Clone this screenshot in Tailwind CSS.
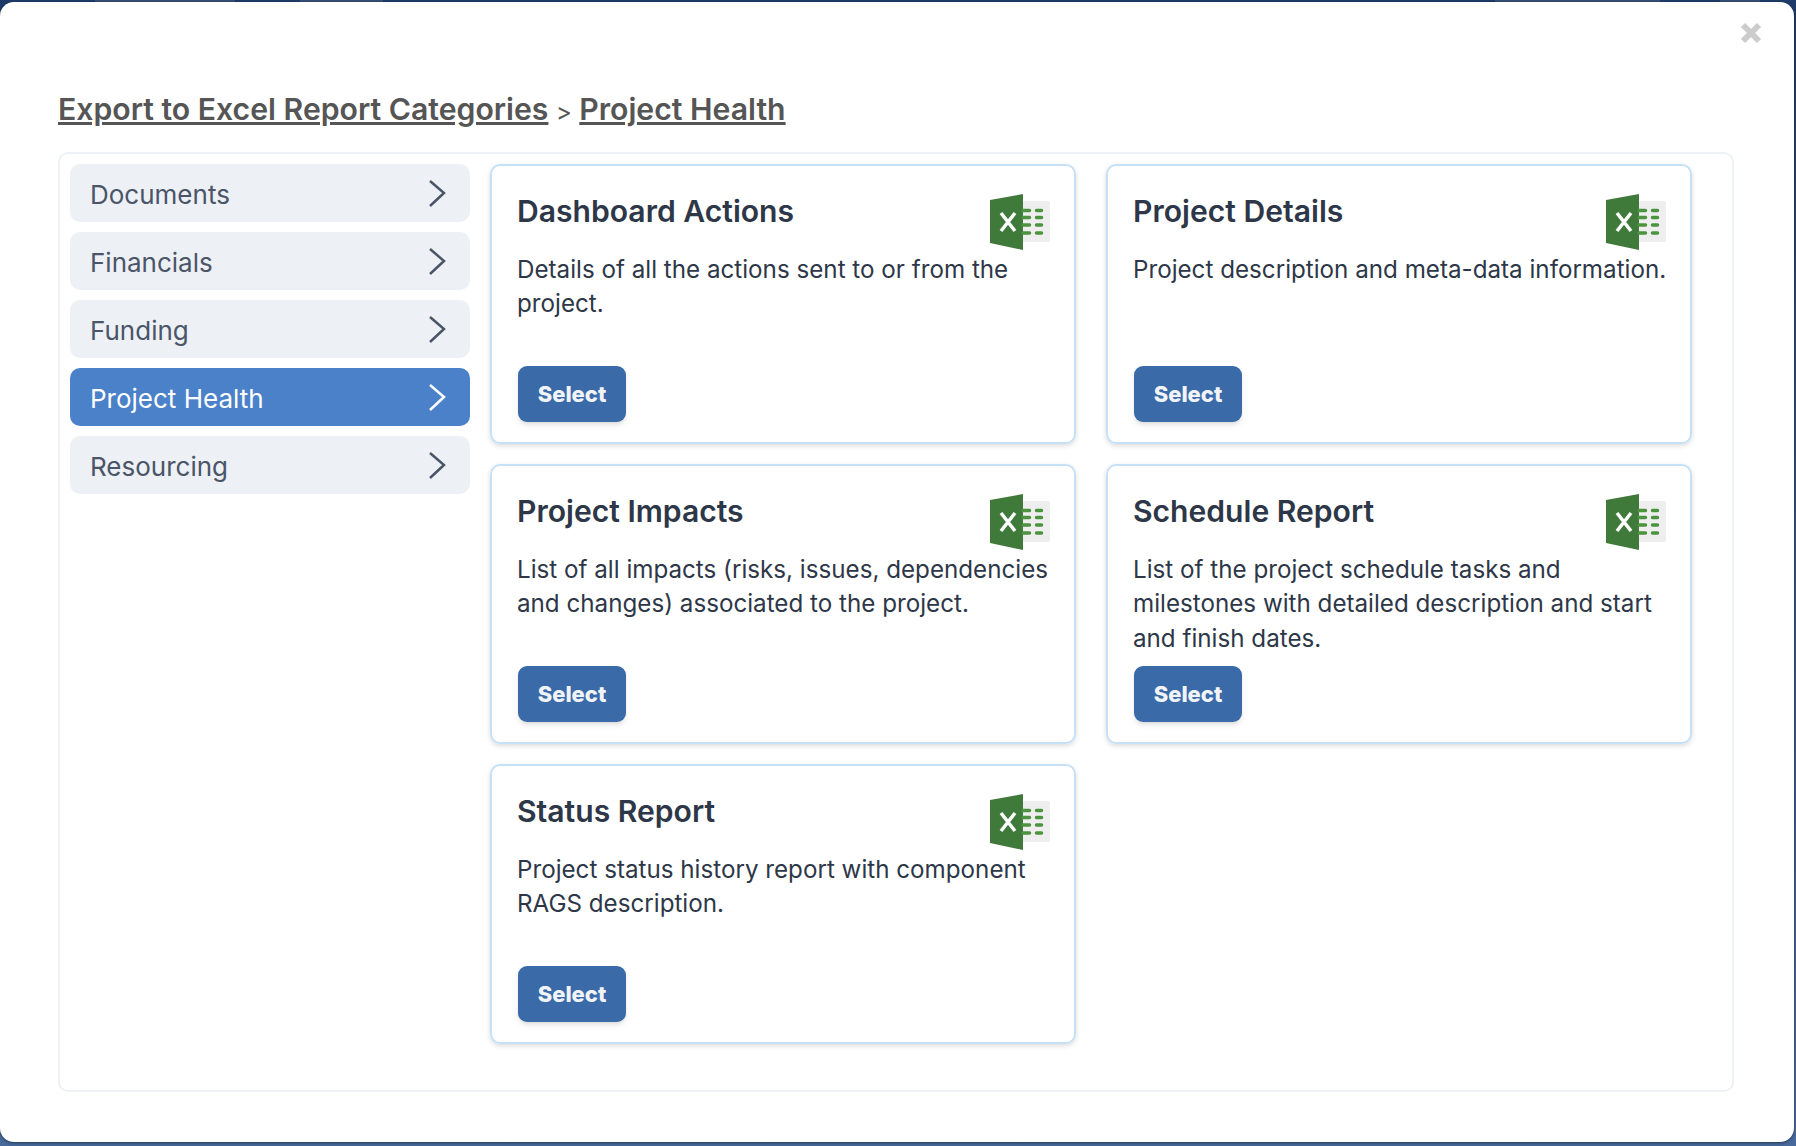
<!DOCTYPE html>
<html>
<head>
    <title>Export to Excel</title>
    <script src="https://cdn.jsdelivr.net/npm/@tailwindcss/browser@4"></script>
</head>
<body class="relative bg-linear-to-b from-[#1e3a68] to-[#47699b] h-[1146px] w-[1796px] overflow-hidden font-['Inter',sans-serif]">
    <!-- page behind the overlay just shows through at the top edge -->
    <div class="absolute left-[95px] top-0 w-[140px] h-[2px] bg-white/10"></div>
    <div class="absolute left-[300px] top-0 w-[83px] h-[2px] bg-white/10"></div>
    <div class="absolute left-[1495px] top-0 w-[165px] h-[2px] bg-white/10"></div>
    <div class="absolute left-[1720px] top-0 w-[40px] h-[2px] bg-white/10"></div>

    <div class="relative mt-[2px] w-[1794px] h-[1140px] bg-white rounded-[14px] shadow-[0_1px_3px_rgba(0,0,0,0.45)] pt-[89px] pl-[58px]">
        <svg class="absolute left-[1740px] top-[20px]" width="22" height="22" viewBox="0 0 22 22">
            <path d="M3 3 L19 19 M19 3 L3 19" stroke="#cccccc" stroke-width="6"/>
        </svg>
        <h1 class="text-[30.2px] leading-[36px] text-[#555555]">
            <a class="font-semibold underline">Export to Excel Report Categories</a>
            <span class="text-[24px] -ml-[1px]">&gt;</span>
            <a class="font-semibold underline -ml-[1px]">Project Health</a>
        </h1>
        <div class="flex gap-[20px] mt-[22px] w-[1676px] h-[940px] border-2 border-[#eef1f6] rounded-[10px] p-[10px]">
            <div class="w-[400px] flex flex-col gap-[10px]">
                <div class="h-[58px] rounded-[10px] bg-[#edf0f5] flex items-center justify-between pl-[20px] pr-[24px] text-[26px] text-[#4a5568]">
                    <span class="pt-[2px]">Documents</span>
                    <svg width="18" height="29" viewBox="0 0 18 29" fill="none" stroke="currentColor" stroke-width="2.5"><path d="M2 2 L16 14 L2 27"/></svg>
                </div>
                <div class="h-[58px] rounded-[10px] bg-[#edf0f5] flex items-center justify-between pl-[20px] pr-[24px] text-[26px] text-[#4a5568]">
                    <span class="pt-[2px]">Financials</span>
                    <svg width="18" height="29" viewBox="0 0 18 29" fill="none" stroke="currentColor" stroke-width="2.5"><path d="M2 2 L16 14 L2 27"/></svg>
                </div>
                <div class="h-[58px] rounded-[10px] bg-[#edf0f5] flex items-center justify-between pl-[20px] pr-[24px] text-[26px] text-[#4a5568]">
                    <span class="pt-[2px]">Funding</span>
                    <svg width="18" height="29" viewBox="0 0 18 29" fill="none" stroke="currentColor" stroke-width="2.5"><path d="M2 2 L16 14 L2 27"/></svg>
                </div>
                <div class="h-[58px] rounded-[10px] bg-[#4a81c9] flex items-center justify-between pl-[20px] pr-[24px] text-[26px] text-white">
                    <span class="pt-[2px]">Project Health</span>
                    <svg width="18" height="29" viewBox="0 0 18 29" fill="none" stroke="currentColor" stroke-width="2.5"><path d="M2 2 L16 14 L2 27"/></svg>
                </div>
                <div class="h-[58px] rounded-[10px] bg-[#edf0f5] flex items-center justify-between pl-[20px] pr-[24px] text-[26px] text-[#4a5568]">
                    <span class="pt-[2px]">Resourcing</span>
                    <svg width="18" height="29" viewBox="0 0 18 29" fill="none" stroke="currentColor" stroke-width="2.5"><path d="M2 2 L16 14 L2 27"/></svg>
                </div>
            </div>
            <div class="grid grid-cols-[586px_586px] gap-x-[30px] gap-y-[20px] content-start">

                <div class="relative h-[280px] flex flex-col border-2 border-[#c5e1f7] rounded-[10px] shadow-[0_2px_5px_rgba(0,0,0,0.14)] pt-[25px] pb-[20px] pl-[25px] pr-[20px]">
                    <h2 class="text-[30.1px] leading-[40px] font-semibold text-[#2d3748]">Dashboard Actions</h2>
                    <p class="mt-[22px] text-[24.2px] leading-[34.4px] text-[#2d3748] w-[535px]">Details of all the actions sent to or from the project.</p>
                    <button class="mt-auto ml-[1px] w-[108px] h-[56px] rounded-[9px] bg-[#3b6aa8] text-[#f0f4f8] text-[22px] font-extrabold shadow-md">Select</button>
                    <svg class="absolute left-[498px] top-[28px]" width="60" height="56" viewBox="0 0 60 56">
                        <rect x="30" y="7" width="30" height="41" rx="2" fill="#eeeeee"/>
                        <path d="M0 6 L33 0 V56 L0 49 Z" fill="#3f7a3a"/>
                        <path d="M11 19 L25 37 M25 19 L11 37" stroke="#ffffff" stroke-width="3.5"/>
                        <path d="M33 16.500 H39.500 M33 23.500 H39.500 M33 31 H39.500 M33 39 H39.500 M46.500 16.500 H51.500 M46.500 23.500 H51.500 M46.500 31 H51.500 M46.500 39 H51.500" stroke="#4b933f" stroke-width="3.500" stroke-linecap="round"/>
                    </svg>
                </div>

                <div class="relative h-[280px] flex flex-col border-2 border-[#c5e1f7] rounded-[10px] shadow-[0_2px_5px_rgba(0,0,0,0.14)] pt-[25px] pb-[20px] pl-[25px] pr-[20px]">
                    <h2 class="text-[30.1px] leading-[40px] font-semibold text-[#2d3748]">Project Details</h2>
                    <p class="mt-[22px] text-[24.2px] leading-[34.4px] text-[#2d3748] w-[535px]">Project description and meta-data information.</p>
                    <button class="mt-auto ml-[1px] w-[108px] h-[56px] rounded-[9px] bg-[#3b6aa8] text-[#f0f4f8] text-[22px] font-extrabold shadow-md">Select</button>
                    <svg class="absolute left-[498px] top-[28px]" width="60" height="56" viewBox="0 0 60 56">
                        <rect x="30" y="7" width="30" height="41" rx="2" fill="#eeeeee"/>
                        <path d="M0 6 L33 0 V56 L0 49 Z" fill="#3f7a3a"/>
                        <path d="M11 19 L25 37 M25 19 L11 37" stroke="#ffffff" stroke-width="3.5"/>
                        <path d="M33 16.500 H39.500 M33 23.500 H39.500 M33 31 H39.500 M33 39 H39.500 M46.500 16.500 H51.500 M46.500 23.500 H51.500 M46.500 31 H51.500 M46.500 39 H51.500" stroke="#4b933f" stroke-width="3.500" stroke-linecap="round"/>
                    </svg>
                </div>

                <div class="relative h-[280px] flex flex-col border-2 border-[#c5e1f7] rounded-[10px] shadow-[0_2px_5px_rgba(0,0,0,0.14)] pt-[25px] pb-[20px] pl-[25px] pr-[20px]">
                    <h2 class="text-[30.1px] leading-[40px] font-semibold text-[#2d3748]">Project Impacts</h2>
                    <p class="mt-[22px] text-[24.2px] leading-[34.4px] text-[#2d3748] w-[535px]">List of all impacts (risks, issues, dependencies and changes) associated to the project.</p>
                    <button class="mt-auto ml-[1px] w-[108px] h-[56px] rounded-[9px] bg-[#3b6aa8] text-[#f0f4f8] text-[22px] font-extrabold shadow-md">Select</button>
                    <svg class="absolute left-[498px] top-[28px]" width="60" height="56" viewBox="0 0 60 56">
                        <rect x="30" y="7" width="30" height="41" rx="2" fill="#eeeeee"/>
                        <path d="M0 6 L33 0 V56 L0 49 Z" fill="#3f7a3a"/>
                        <path d="M11 19 L25 37 M25 19 L11 37" stroke="#ffffff" stroke-width="3.5"/>
                        <path d="M33 16.500 H39.500 M33 23.500 H39.500 M33 31 H39.500 M33 39 H39.500 M46.500 16.500 H51.500 M46.500 23.500 H51.500 M46.500 31 H51.500 M46.500 39 H51.500" stroke="#4b933f" stroke-width="3.500" stroke-linecap="round"/>
                    </svg>
                </div>

                <div class="relative h-[280px] flex flex-col border-2 border-[#c5e1f7] rounded-[10px] shadow-[0_2px_5px_rgba(0,0,0,0.14)] pt-[25px] pb-[20px] pl-[25px] pr-[20px]">
                    <h2 class="text-[30.1px] leading-[40px] font-semibold text-[#2d3748]">Schedule Report</h2>
                    <p class="mt-[22px] text-[24.2px] leading-[34.4px] text-[#2d3748] w-[535px]">List of the project schedule tasks and milestones with detailed description and start and finish dates.</p>
                    <button class="mt-auto ml-[1px] w-[108px] h-[56px] rounded-[9px] bg-[#3b6aa8] text-[#f0f4f8] text-[22px] font-extrabold shadow-md">Select</button>
                    <svg class="absolute left-[498px] top-[28px]" width="60" height="56" viewBox="0 0 60 56">
                        <rect x="30" y="7" width="30" height="41" rx="2" fill="#eeeeee"/>
                        <path d="M0 6 L33 0 V56 L0 49 Z" fill="#3f7a3a"/>
                        <path d="M11 19 L25 37 M25 19 L11 37" stroke="#ffffff" stroke-width="3.5"/>
                        <path d="M33 16.500 H39.500 M33 23.500 H39.500 M33 31 H39.500 M33 39 H39.500 M46.500 16.500 H51.500 M46.500 23.500 H51.500 M46.500 31 H51.500 M46.500 39 H51.500" stroke="#4b933f" stroke-width="3.500" stroke-linecap="round"/>
                    </svg>
                </div>

                <div class="relative h-[280px] flex flex-col border-2 border-[#c5e1f7] rounded-[10px] shadow-[0_2px_5px_rgba(0,0,0,0.14)] pt-[25px] pb-[20px] pl-[25px] pr-[20px]">
                    <h2 class="text-[30.1px] leading-[40px] font-semibold text-[#2d3748]">Status Report</h2>
                    <p class="mt-[22px] text-[24.2px] leading-[34.4px] text-[#2d3748] w-[535px]">Project status history report with component RAGS description.</p>
                    <button class="mt-auto ml-[1px] w-[108px] h-[56px] rounded-[9px] bg-[#3b6aa8] text-[#f0f4f8] text-[22px] font-extrabold shadow-md">Select</button>
                    <svg class="absolute left-[498px] top-[28px]" width="60" height="56" viewBox="0 0 60 56">
                        <rect x="30" y="7" width="30" height="41" rx="2" fill="#eeeeee"/>
                        <path d="M0 6 L33 0 V56 L0 49 Z" fill="#3f7a3a"/>
                        <path d="M11 19 L25 37 M25 19 L11 37" stroke="#ffffff" stroke-width="3.5"/>
                        <path d="M33 16.500 H39.500 M33 23.500 H39.500 M33 31 H39.500 M33 39 H39.500 M46.500 16.500 H51.500 M46.500 23.500 H51.500 M46.500 31 H51.500 M46.500 39 H51.500" stroke="#4b933f" stroke-width="3.500" stroke-linecap="round"/>
                    </svg>
                </div>

            </div>
        </div>
    </div>
</body>
</html>
